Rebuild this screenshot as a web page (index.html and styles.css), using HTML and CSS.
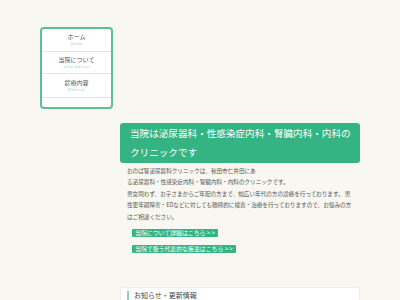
FILE: index.html
```html
<!DOCTYPE html>
<html lang="ja">
<head>
    <meta charset="UTF-8">
    <meta name="viewport" content="width=device-width, initial-scale=1.0">
    <title>おのば腎泌尿器科クリニック</title>
    <link rel="stylesheet" href="styles.css">
</head>
<body>
    <div class="wrapper">
        <nav class="side-nav">
            <a class="nav-item" href="#">
                <span class="nav-ja">ホーム</span>
                <span class="nav-en">Home</span>
            </a>
            <a class="nav-item" href="#">
                <span class="nav-ja">当院について</span>
                <span class="nav-en">Information</span>
            </a>
            <a class="nav-item" href="#">
                <span class="nav-ja">診療内容</span>
                <span class="nav-en">Medical</span>
            </a>
        </nav>

        <main class="main">
            <h1 class="lead">当院は泌尿器科・性感染症内科・腎臓内科・内科のクリニックです</h1>
            <p class="intro">
                おのば腎泌尿器科クリニックは、秋田市仁井田にあ<br>
                る泌尿器科・性感染症内科・腎臓内科・内科のクリニックです。<br>
                男女問わず、お子さまからご年配の方まで、幅広い年代の方の診療を行っております。
                男性更年期障害・EDなどに対しても積極的に検査・治療を行っておりますので、お悩みの方はご相談ください。
            </p>
            <div class="links">
                <a class="link-btn" href="#">当院について詳細はこちら &gt; &gt;</a>
                <a class="link-btn" href="#">当院で扱う代表的な疾患はこちら &gt; &gt;</a>
            </div>

            <section class="news">
                <h2>お知らせ・更新情報</h2>
            </section>
        </main>
    </div>
</body>
</html>
```

FILE: styles.css
```css
body {
    margin: 0;
    background-color: #f8f7f1;
    font-family: "Noto Sans CJK JP", "Noto Sans", sans-serif;
    color: #555;
}
.wrapper {
    display: flex;
    gap: 7px;
    padding: 27px 0 0 40px;
}
.side-nav {
    width: 69px;
    height: 78px;
    border: 2px solid #5dbf95;
    border-radius: 4px;
    background-color: #fff;
    display: flex;
    flex-direction: column;
}
.nav-item {
    display: flex;
    flex-direction: column;
    align-items: center;
    height: 22.5px;
    padding-top: 3px;
    box-sizing: border-box;
    border-bottom: 1px solid #e4e4e4;
    text-decoration: none;
}
.nav-item:nth-child(3) {
    height: 24px;
    padding-top: 4px;
}
.nav-ja {
    font-size: 6px;
    line-height: 9px;
    color: #555;
}
.nav-en {
    font-size: 3.5px;
    line-height: 5px;
    letter-spacing: 0.6px;
    color: #8fd0c8;
}
.main {
    width: 240px;
    flex-shrink: 0;
    padding-top: 96px;
}
.lead {
    margin: 0;
    padding: 1px 8px 2px 10px;
    background-color: #34b383;
    border-radius: 3px;
    color: #fff;
    font-weight: normal;
    font-size: 9.6px;
    line-height: 18.5px;
}
.intro {
    margin: 3px 0 0;
    padding: 0 7px;
    font-size: 5.6px;
    line-height: 11.4px;
    color: #555;
}
.links {
    display: flex;
    flex-direction: column;
    align-items: flex-start;
    gap: 8px;
    padding: 6px 0 0 12px;
}
.link-btn {
    display: block;
    padding: 0 3px;
    height: 8px;
    line-height: 8px;
    font-size: 5.9px;
    color: #fff;
    background-color: #34b383;
    border-radius: 1px;
    text-decoration: none;
}
.news {
    margin-top: 34px;
    background-color: #fff;
    border: 1px solid #eeeeea;
    border-radius: 2px;
    padding: 3px 6px;
}
.news h2 {
    margin: 0;
    padding-left: 5px;
    border-left: 2px solid #8fd1b8;
    font-size: 7px;
    font-weight: normal;
    line-height: 9px;
    color: #444;
}
```
